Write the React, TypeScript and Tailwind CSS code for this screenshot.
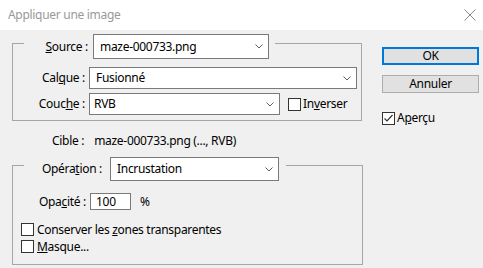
import React from "react";

const font = { fontFamily: '"Noto Sans", "Open Sans", sans-serif' };

function Chevron() {
  return (
    <svg width="8" height="5" viewBox="0 0 8 5" className="shrink-0">
      <path d="M0.5 0.5 L4 4 L7.5 0.5" fill="none" stroke="#606060" strokeWidth="1" />
    </svg>
  );
}

function Select({ value, w, h, pl }: { value: string; w: string; h: string; pl: string }) {
  return (
    <div className={`${w} ${h} ${pl} flex items-center justify-between pr-[5px] bg-white border border-[#7a7a7a] text-[12px] text-black`}>
      <span>{value}</span>
      <Chevron />
    </div>
  );
}

function Check({ checked }: { checked?: boolean }) {
  return (
    <div className="w-[13px] h-[13px] shrink-0 bg-white border border-[#333333] flex items-center justify-center">
      {checked && (
        <svg width="11" height="11" viewBox="0 0 11 11">
          <path d="M1.5 5.5 L4 8 L9.5 2" fill="none" stroke="#333" strokeWidth="1.2" />
        </svg>
      )}
    </div>
  );
}

export default function App() {
  return (
    <div className="w-[483px] h-[268px] bg-[#f0f0f0] flex flex-col overflow-hidden text-[12px] tracking-[-0.3px] text-black" style={font}>
      {/* title bar */}
      <div className="h-[30px] bg-white flex items-center justify-between pl-[8px] pr-[5px] shrink-0">
        <span className="text-[12px] text-[#999999]">Appliquer une image</span>
        <svg width="12" height="12" viewBox="0 0 12 12" className="mr-[2px]">
          <path d="M0.5 0.5 L11.5 11.5 M11.5 0.5 L0.5 11.5" stroke="#8a8a8a" strokeWidth="1" />
        </svg>
      </div>
      <div className="flex">
        {/* left column */}
        <div className="w-[370px] pl-[12px] flex flex-col">
          {/* group 1 */}
          <div className="mt-[13px] w-[350px] h-[78px] border border-[#a6a6a6] flex flex-col">
            <div className="-mt-[10px] ml-[11px] h-[25px] flex items-center bg-[#f0f0f0] self-start">
              <span className="w-[69px] pr-[5px] text-right">
                <u>S</u>ource :
              </span>
              <Select value="maze-000733.png" w="w-[176px]" h="h-[25px]" pl="pl-[6px]" />
              <div className="w-[6px]" />
            </div>
            <div className="mt-[8px] h-[22px] flex items-center">
              <span className="w-[76px] pr-[4px] text-right">
                Cal<u>q</u>ue :
              </span>
              <Select value="Fusionné" w="w-[268px]" h="h-[22px]" pl="pl-[6px]" />
            </div>
            <div className="mt-[4px] h-[22px] flex items-center">
              <span className="w-[76px] pr-[4px] text-right">
                Couc<u>h</u>e :
              </span>
              <Select value="RVB" w="w-[191px]" h="h-[22px]" pl="pl-[4px]" />
              <div className="ml-[8px] flex items-center gap-[2px]">
                <Check />
                <span>
                  In<u>v</u>erser
                </span>
              </div>
            </div>
          </div>
          {/* cible */}
          <div className="mt-[12px] h-[16px] flex items-center pl-[40px]">
            <span>Cible :</span>
            <span className="ml-[10px]">maze-000733.png (..., RVB)</span>
          </div>
          {/* group 2 */}
          <div className="mt-[16px] w-[351px] h-[100px] border border-[#a6a6a6] flex flex-col">
            <div className="-mt-[9px] ml-[11px] h-[24px] flex items-center bg-[#f0f0f0] self-start">
              <span className="w-[86px] pr-[8px] text-right">
                Opéra<u>t</u>ion :
              </span>
              <Select value="Incrustation" w="w-[169px]" h="h-[24px]" pl="pl-[6px]" />
              <div className="w-[7px]" />
            </div>
            <div className="mt-[12px] h-[17px] flex items-center">
              <span className="w-[77px] pr-[4px] text-right">
                Opa<u>c</u>ité :
              </span>
              <div className="w-[41px] h-[17px] bg-white border border-[#7a7a7a] flex items-center pl-[5px]">100</div>
              <span className="ml-[9px]">%</span>
            </div>
            <div className="mt-[13px] h-[13px] ml-[8px] flex items-center gap-[3px]">
              <Check />
              <span>
                Conserver les <u>z</u>ones transparentes
              </span>
            </div>
            <div className="mt-[4px] h-[13px] ml-[8px] flex items-center gap-[3px]">
              <Check />
              <span>
                <u>M</u>asque...
              </span>
            </div>
          </div>
        </div>
        {/* right column */}
        <div className="ml-[12px] flex flex-col">
          <div className="mt-[17px] w-[97px] h-[18px] border-2 border-[#0078d7] bg-[#e1e1e1] flex items-center justify-center">
            OK
          </div>
          <div className="mt-[10px] w-[97px] h-[18px] border border-[#adadad] bg-[#e1e1e1] flex items-center justify-center">
            Annuler
          </div>
          <div className="mt-[16px] flex items-center gap-[2px]">
            <Check checked />
            <span>
              A<u>p</u>erçu
            </span>
          </div>
        </div>
      </div>
    </div>
  );
}
